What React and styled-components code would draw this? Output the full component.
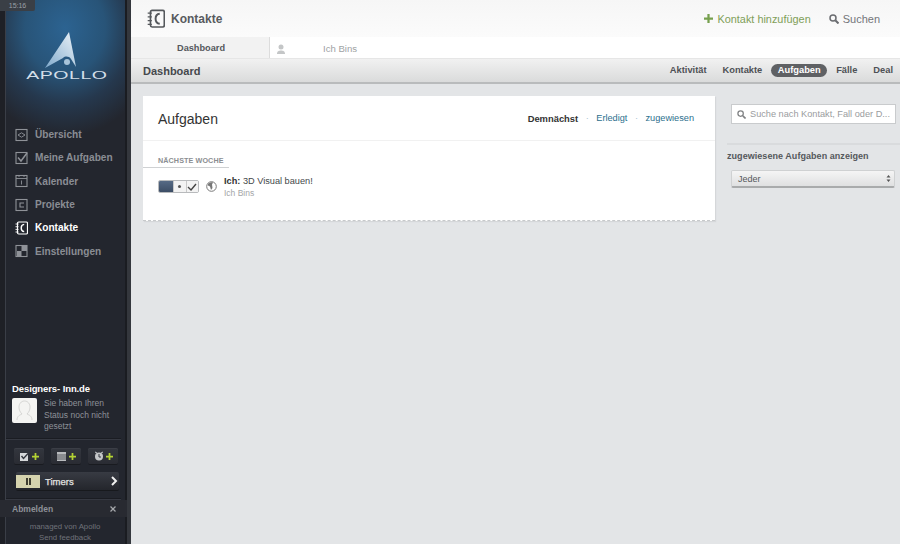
import React from "react";
import styled, { createGlobalStyle } from "styled-components";

const Global = createGlobalStyle`
  html, body { margin: 0; padding: 0; height: 544px; overflow: hidden; background: #e3e5e7; }
  * { box-sizing: border-box; }
  body { font-family: "Liberation Sans", Arial, sans-serif; -webkit-font-smoothing: antialiased; }
`;

const Page = styled.div`
  display: flex;
  width: 900px;
  height: 544px;
  overflow: hidden;
`;

const Sidebar = styled.aside`
  position: relative;
  width: 131px;
  flex: none;
  height: 544px;
  display: flex;
  flex-direction: column;
  background:
    radial-gradient(ellipse 96px 108px at 65px 28px, #2c6391 0%, #285478 42%, rgba(38,62,88,.75) 70%, rgba(35,38,46,0) 100%),
    #23262e;
  border-right: 4px solid #34373d;
  box-shadow: inset -2px 0 0 #1a1c21, inset 5px 0 0 #1e2026, inset 6px 0 0 #3a3e47;
`;

const Clock = styled.div`
  position: absolute;
  left: 0;
  top: 0;
  width: 35px;
  height: 11px;
  background: #3a3f46;
  color: #9aa0a6;
  font-size: 7px;
  line-height: 11px;
  text-align: center;
  border-bottom-right-radius: 2px;
`;

const LogoBlock = styled.div`
  height: 123px;
  padding-top: 32px;
  display: flex;
  flex-direction: column;
  align-items: center;
`;

const LogoMark = styled.svg`
  margin-right: 6px;
`;

const LogoWord = styled.div`
  color: #d3dfe9;
  font-family: "Liberation Sans", sans-serif;
  font-size: 11.5px;
  line-height: 11px;
  letter-spacing: 0.3px;
  transform: scaleX(1.7);
  font-weight: 400;
  margin-top: 1px;
  margin-left: 6px;
`;

const Nav = styled.nav`
  display: flex;
  flex-direction: column;
  padding-left: 15px;
`;

const NavItem = styled.a`
  display: flex;
  align-items: center;
  height: 23.3px;
  gap: 7px;
  font-size: 10.1px;
  font-weight: 700;
  color: ${(p) => (p.$active ? "#ffffff" : "#8a8d94")};
`;

const NavIcon = styled.svg`
  width: 13px;
  height: 14px;
  flex: none;
  color: ${(p) => (p.$active ? "#ffffff" : "#8f9298")};
`;

const Spacer = styled.div`
  flex: 1;
`;

const Account = styled.div`
  padding: 0 0 0 12px;
`;

const AccountName = styled.div`
  color: #fff;
  font-size: 9.5px;
  font-weight: 700;
  line-height: 13px;
  letter-spacing: -0.1px;
`;

const StatusRow = styled.div`
  display: flex;
  gap: 7px;
  margin-top: 3px;
`;

const Avatar = styled.div`
  width: 25px;
  height: 25px;
  flex: none;
  background: #f4f4f2;
  border-radius: 2px;
  display: flex;
  align-items: center;
  justify-content: center;
`;

const StatusText = styled.div`
  width: 72px;
  color: #8e9198;
  font-size: 8.5px;
  line-height: 11.2px;
`;

const Divider = styled.div`
  height: 2px;
  margin: ${(p) => p.$m || "0"};
  background: #1a1c22;
  border-bottom: 1px solid #353841;
`;

const QuickRow = styled.div`
  display: flex;
  gap: 7px;
  padding-left: 14px;
  margin-top: 8px;
`;

const QuickButton = styled.button`
  width: 30px;
  height: 16px;
  padding: 0;
  border: 0;
  border-radius: 2px;
  background: linear-gradient(#33363e, #2a2c33);
  box-shadow: inset 0 1px 0 #3b3e46, 0 1px 0 #191b20;
  display: flex;
  align-items: center;
  justify-content: center;
  gap: 2px;
`;

const Timers = styled.div`
  display: flex;
  align-items: center;
  margin: 8px 0 0 16px;
  width: 103px;
  height: 18px;
  border-radius: 2px;
  background: linear-gradient(#383b43, #24262c);
  box-shadow: 0 1px 0 #17191d;
  color: #e4e4e2;
  font-size: 9.5px;
`;

const Pause = styled.div`
  width: 24px;
  height: 13px;
  margin-right: 5px;
  background: #d5d3ae;
  display: flex;
  align-items: center;
  justify-content: center;
  gap: 1px;
  &::before, &::after {
    content: "";
    width: 2px;
    height: 7px;
    background: #3d3c30;
  }
`;

const TimersLabel = styled.span`
  flex: 1;
  -webkit-text-stroke: 0.25px #e4e4e2;
`;

const LogoutRow = styled.div`
  display: flex;
  align-items: center;
  justify-content: space-between;
  height: 17px;
  padding: 0 11px 0 12px;
  color: #8e9198;
  font-size: 8.5px;
  font-weight: 700;
  background: #282a31;
`;

const Foot = styled.div`
  text-align: center;
  color: #6f727a;
  font-size: 7.8px;
  line-height: 11px;
  padding: 4px 0 1px 3px;
`;

const Main = styled.main`
  flex: 1;
  display: flex;
  flex-direction: column;
  min-width: 0;
`;

const TopBar = styled.header`
  height: 37px;
  display: flex;
  align-items: center;
  padding: 0 20px 0 16px;
  background: linear-gradient(#f6f6f6, #fbfbfb);
`;

const TopTitle = styled.h1`
  margin: 0 0 0 6px;
  flex: 1;
  color: #585b5f;
  font-size: 12px;
  font-weight: 700;
`;

const AddLink = styled.a`
  display: flex;
  align-items: center;
  gap: 4px;
  color: #7f9f58;
  font-size: 10.9px;
`;

const SearchLink = styled.a`
  display: flex;
  align-items: center;
  gap: 4px;
  margin-left: 18px;
  color: #74767a;
  font-size: 11px;
`;

const Tabs = styled.div`
  height: 21px;
  display: flex;
  background: #fff;
`;

const DashTab = styled.div`
  width: 139px;
  background: #f2f2f2;
  border-right: 1px solid #dcdcdc;
  color: #55585c;
  font-size: 9.2px;
  font-weight: 700;
  text-align: center;
  line-height: 23px;
  padding-left: 2px;
`;

const PersonTab = styled.div`
  display: flex;
  align-items: center;
  color: #a0a2a4;
  font-size: 9.6px;
  padding: 2px 0 0 6px;
`;

const PersonName = styled.span`
  margin-left: 37px;
`;

const SubNav = styled.div`
  height: 26px;
  display: flex;
  align-items: center;
  justify-content: space-between;
  padding: 0 7px 0 12px;
  background: linear-gradient(#f1f1f1, #dadbdb);
  border-top: 1px solid #e6e6e6;
  border-bottom: 2px solid #b9bbbc;
`;

const SubTitle = styled.div`
  color: #45484c;
  font-size: 11px;
  font-weight: 700;
`;

const SubLinks = styled.div`
  display: flex;
  align-items: center;
  gap: 16px;
`;

const SubLink = styled.a`
  color: ${(p) => (p.$active ? "#fff" : "#4e5155")};
  background: ${(p) => (p.$active ? "#5f6164" : "transparent")};
  font-size: 9.3px;
  font-weight: 700;
  line-height: 13px;
  border-radius: 7px;
  padding: ${(p) => (p.$active ? "0 6.5px" : "0")};
  margin: ${(p) => (p.$active ? "0 -7px" : "0")};
`;

const Content = styled.div`
  flex: 1;
  display: flex;
  align-items: flex-start;
  padding: 12px 0 0 12px;
  background: #e3e5e7;
`;

const Card = styled.section`
  width: 572px;
  height: 125px;
  background: #fff;
  border-bottom: 1px dashed #c7c9cb;
  box-shadow: 1px 1px 1px #d5d7d9;
`;

const CardHead = styled.div`
  height: 45px;
  display: flex;
  align-items: center;
  justify-content: space-between;
  padding: 0 21px 0 15px;
  border-bottom: 1px solid #f1f1f1;
`;

const CardTitle = styled.h2`
  margin: 2px 0 0;
  color: #333;
  font-size: 14px;
  font-weight: 400;
`;

const Filters = styled.div`
  display: flex;
  align-items: center;
  gap: 7.5px;
  font-size: 9.2px;
`;

const FilterOn = styled.span`
  color: #333;
  font-size: 9.4px;
  font-weight: 700;
`;

const FilterLink = styled.a`
  color: #2d6f8d;
`;

const Dot = styled.span`
  color: #aac4d0;
`;

const Group = styled.div`
  padding: 15px 0 0 0;
`;

const GroupLabel = styled.div`
  width: 86px;
  padding: 0 0 2px 15px;
  color: #8b8e91;
  font-size: 7.2px;
  font-weight: 700;
  line-height: 9px;
  border-bottom: 1px solid #cfd1d3;
  letter-spacing: 0.1px;
`;

const TaskRow = styled.div`
  display: flex;
  align-items: flex-start;
  padding: 7px 0 0 15px;
`;

const Switcher = styled.div`
  display: flex;
  width: 41px;
  height: 13px;
  margin-top: 5px;
  border-radius: 2px;
  overflow: hidden;
  border: 1px solid #b8babc;
`;

const SwitchDark = styled.div`
  width: 14px;
  background: linear-gradient(#566a85, #3c4d65);
`;

const SwitchCell = styled.div`
  flex: 1;
  display: flex;
  align-items: center;
  justify-content: center;
  background: #f3f3f3;
  border-left: 1px solid #c8c8c8;
`;

const SwitchDot = styled.span`
  width: 3px;
  height: 3px;
  border-radius: 50%;
  background: #555;
`;

const GlobeIcon = styled.svg`
  width: 11px;
  height: 11px;
  margin: 6px 0 0 7px;
  flex: none;
`;

const TaskBody = styled.div`
  margin-left: 7px;
`;

const TaskTitle = styled.div`
  color: #44474a;
  font-size: 9.2px;
  line-height: 12px;
`;

const TaskTitleStrong = styled.b`
  color: #333;
`;

const TaskMeta = styled.div`
  margin-top: 1px;
  color: #a4a6a8;
  font-size: 8.5px;
  line-height: 10px;
`;

const Side = styled.div`
  flex: 1;
  padding-left: 12px;
`;

const SearchBox = styled.div`
  width: 165px;
  height: 20px;
  margin-left: 4px;
  margin-top: 8px;
  background: #fff;
  border: 1px solid #c9cbcd;
  display: flex;
  align-items: center;
  gap: 4px;
  padding-left: 5px;
  color: #9a9c9e;
  font-size: 9.2px;
  white-space: nowrap;
  overflow: hidden;
`;

const SideRule = styled.div`
  height: 2px;
  margin: 19px 0 0 0;
  background: #d9dbdd;
`;

const SideLabel = styled.div`
  margin: 5px 0 0 0;
  color: #55585c;
  font-size: 9px;
  font-weight: 700;
  line-height: 12px;
  letter-spacing: 0.05px;
`;

const Select = styled.div`
  width: 164px;
  height: 18px;
  margin: 8px 0 0 4px;
  display: flex;
  align-items: center;
  justify-content: space-between;
  padding: 0 3px 0 6px;
  border: 1px solid #cfd1d2;
  border-bottom: 2px solid #a9abac;
  border-radius: 2px;
  background: linear-gradient(#f5f5f5, #dfe0e1);
  color: #55585b;
  font-size: 9px;
`;

const Ic = ({ children }) => (
  <NavIcon viewBox="0 0 13 14" fill="none" stroke="currentColor" strokeWidth="1.1">
    {children}
  </NavIcon>
);

const Book = ({ size = 13, color = "currentColor" }) => (
  <svg width={size} height={size * 1.08} viewBox="0 0 13 14" fill="none" stroke={color} strokeWidth="1.2">
    <rect x="2.5" y="1" width="10" height="12" rx="1.2" />
    <path d="M0.5 3h3M0.5 5.7h3M0.5 8.4h3M0.5 11h3" strokeWidth="0.9" />
    <path d="M9.2 3.4c-2 .2-3 1.7-3 3.6s1 3.4 3 3.6" strokeWidth="1.4" />
  </svg>
);

const Plus = ({ color = "#b4d334", size = 7 }) => (
  <svg width={size} height={size} viewBox="0 0 8 8">
    <path d="M3 0h2v3h3v2H5v3H3V5H0V3h3z" fill={color} />
  </svg>
);

export default function App() {
  return (
    <Page>
      <Global />
      <Sidebar>
        <Clock>15:16</Clock>
        <LogoBlock>
          <LogoMark width="32" height="37" viewBox="0 0 32 37">
            <defs>
              <linearGradient id="wing" x1="0" y1="1" x2="1" y2="0">
                <stop offset="0" stopColor="#7fa9cb" />
                <stop offset="1" stopColor="#eef4f9" />
              </linearGradient>
            </defs>
            <path d="M24 0 L31 35 L26 27 C24 24 20 24 18 26 L0 36 Z" fill="url(#wing)" />
            <circle cx="22" cy="30" r="3" fill="#a8c4da" />
          </LogoMark>
          <LogoWord>APOLLO</LogoWord>
        </LogoBlock>
        <Nav>
          <NavItem>
            <Ic><rect x="1" y="1.5" width="11" height="11" /><path d="M3 7l3.5-2.2L10 7l-3.5 2.2z" strokeWidth=".9" /></Ic>
            Übersicht
          </NavItem>
          <NavItem>
            <Ic><rect x="1" y="1.5" width="11" height="11" /><path d="M3 6.5l3 3.500 6-8" strokeWidth="1.5" /></Ic>
            Meine Aufgaben
          </NavItem>
          <NavItem>
            <Ic><rect x="1" y="1.5" width="11" height="11" /><path d="M1 4.5h11M4 1v2M9 1v2M6.5 6.5v4" strokeWidth=".9" /></Ic>
            Kalender
          </NavItem>
          <NavItem>
            <Ic><rect x="1" y="1.5" width="11" height="11" /><path d="M9 5H5v4h4" /></Ic>
            Projekte
          </NavItem>
          <NavItem $active>
            <NavIcon as="span" $active><Book /></NavIcon>
            Kontakte
          </NavItem>
          <NavItem>
            <Ic><rect x="1" y="1.5" width="11" height="11" /><path d="M6.5 2v5H2v5h4.5V7H12V2z" fill="currentColor" stroke="none" /></Ic>
            Einstellungen
          </NavItem>
        </Nav>
        <Spacer />
        <Account>
          <AccountName>Designers- Inn.de</AccountName>
          <StatusRow>
            <Avatar>
              <svg width="19" height="21" viewBox="0 0 19 21" fill="none" stroke="#d5d5d3" strokeWidth="1">
                <path d="M2 20c0-4 3-5 5-6-2-2-3-4-3-7 0-3 2-6 5.500-6s5.500 3 5.500 6c0 3-1 5-3 7 2 1 5 2 5 6" />
              </svg>
            </Avatar>
            <StatusText>Sie haben Ihren Status noch nicht gesetzt</StatusText>
          </StatusRow>
        </Account>
        <Divider $m="6px 6px 0 6px" />
        <QuickRow>
          <QuickButton>
            <svg width="10" height="9" viewBox="0 0 10 9"><rect x="0" y="1" width="8" height="8" fill="#d6d8da" /><path d="M1.500 4l2 2.500L9 .5" fill="none" stroke="#33363e" strokeWidth="1.400" /></svg>
            <Plus />
          </QuickButton>
          <QuickButton>
            <svg width="10" height="9" viewBox="0 0 10 9"><rect x="0" y="0" width="9" height="9" fill="#b9bbbe" /><path d="M0 3h9M0 5h9M0 7h9" stroke="#33363e" strokeWidth=".7" /></svg>
            <Plus />
          </QuickButton>
          <QuickButton>
            <svg width="10" height="10" viewBox="0 0 10 10"><circle cx="5" cy="5.500" r="4" fill="#c4c6c8" /><path d="M5 3v3h2" stroke="#33363e" fill="none" /><path d="M1 1l2 1M9 1L7 2" stroke="#c4c6c8" /></svg>
            <Plus />
          </QuickButton>
        </QuickRow>
        <Timers>
          <Pause />
          <TimersLabel>Timers</TimersLabel>
          <svg width="9" height="10" viewBox="0 0 9 10"><path d="M2 1l4 4-4 4" fill="none" stroke="#f0f0f0" strokeWidth="2" /></svg>
        </Timers>
        <Divider $m="8px 6px 0 6px" />
        <LogoutRow>
          Abmelden
          <svg width="6" height="6" viewBox="0 0 6 6"><path d="M.5.5l5 5M5.500.5l-5 5" stroke="#a5a7ab" strokeWidth="1.300" /></svg>
        </LogoutRow>
        <Foot>managed von Apollo<br />Send feedback</Foot>
      </Sidebar>
      <Main>
        <TopBar>
          <Book size={18} color="#55585c" />
          <TopTitle>Kontakte</TopTitle>
          <AddLink><Plus color="#76a04e" size={9} />Kontakt hinzufügen</AddLink>
          <SearchLink>
            <svg width="10" height="10" viewBox="0 0 10 10" fill="none" stroke="#6a6c70" strokeWidth="1.500"><circle cx="4" cy="4" r="3" /><path d="M6.500 6.500L9.500 9.500" strokeWidth="2" /></svg>
            Suchen
          </SearchLink>
        </TopBar>
        <Tabs>
          <DashTab>Dashboard</DashTab>
          <PersonTab>
            <svg width="10" height="10" viewBox="0 0 10 10"><circle cx="5" cy="3" r="2.500" fill="#c4c6c7" /><path d="M1 10c0-3 2-3.500 4-3.500S9 7 9 10z" fill="#c4c6c7" /></svg>
            <PersonName>Ich Bins</PersonName>
          </PersonTab>
        </Tabs>
        <SubNav>
          <SubTitle>Dashboard</SubTitle>
          <SubLinks>
            <SubLink>Aktivität</SubLink>
            <SubLink>Kontakte</SubLink>
            <SubLink $active>Aufgaben</SubLink>
            <SubLink>Fälle</SubLink>
            <SubLink>Deal</SubLink>
          </SubLinks>
        </SubNav>
        <Content>
          <Card>
            <CardHead>
              <CardTitle>Aufgaben</CardTitle>
              <Filters>
                <FilterOn>Demnächst</FilterOn>
                <Dot>·</Dot>
                <FilterLink>Erledigt</FilterLink>
                <Dot>·</Dot>
                <FilterLink>zugewiesen</FilterLink>
              </Filters>
            </CardHead>
            <Group>
              <GroupLabel>NÄCHSTE WOCHE</GroupLabel>
              <TaskRow>
                <Switcher>
                  <SwitchDark />
                  <SwitchCell><SwitchDot /></SwitchCell>
                  <SwitchCell>
                    <svg width="10" height="8" viewBox="0 0 10 8"><path d="M1 4l3 3 5-6" fill="none" stroke="#444" strokeWidth="1.400" /></svg>
                  </SwitchCell>
                </Switcher>
                <GlobeIcon viewBox="0 0 11 11">
                  <circle cx="5.500" cy="5.500" r="4.800" fill="none" stroke="#777" strokeWidth="1" />
                  <path d="M2 3c1.500-1.500 4-2 5-1.500l-1 2 .5 3.500-1.500 2-1-3.500-2-1z" fill="#777" />
                </GlobeIcon>
                <TaskBody>
                  <TaskTitle><TaskTitleStrong>Ich:</TaskTitleStrong> 3D Visual bauen!</TaskTitle>
                  <TaskMeta>Ich Bins</TaskMeta>
                </TaskBody>
              </TaskRow>
            </Group>
          </Card>
          <Side>
            <SearchBox>
              <svg width="9" height="9" viewBox="0 0 10 10" fill="none" stroke="#808284" strokeWidth="1.400"><circle cx="4" cy="4" r="3" /><path d="M6.500 6.500L9.500 9.500" strokeWidth="1.800" /></svg>
              Suche nach Kontakt, Fall oder D...
            </SearchBox>
            <SideRule />
            <SideLabel>zugewiesene Aufgaben anzeigen</SideLabel>
            <Select>
              Jeder
              <svg width="5" height="9" viewBox="0 0 5 9"><path d="M2.500 1L4.500 3.500H.5zM2.500 8L.5 5.500h4z" fill="#555" /></svg>
            </Select>
          </Side>
        </Content>
      </Main>
    </Page>
  );
}
